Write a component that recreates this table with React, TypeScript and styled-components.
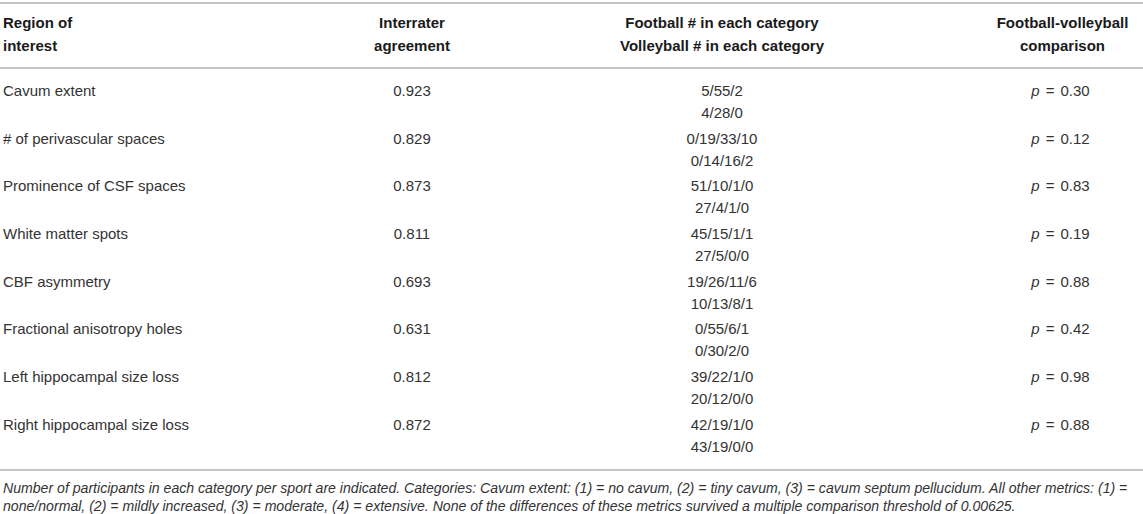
import React from 'react';
import styled, { createGlobalStyle } from 'styled-components';

const GlobalStyle = createGlobalStyle`
  body {
    margin: 0;
    background: #ffffff;
    font-family: "Liberation Sans", Arial, sans-serif;
    color: #333333;
  }
`;

const Wrapper = styled.div`
  width: 1143px;
  padding-top: 2px;
`;

const Table = styled.table`
  width: 100%;
  border-collapse: collapse;
  table-layout: fixed;
  font-size: 15px;
`;

const HeadRow = styled.tr`
  border-top: 2px solid #c4c4c4;
  border-bottom: 2px solid #c4c4c4;
`;

const HeadCell = styled.th<{ align?: string; width: number }>`
  box-sizing: border-box;
  width: ${({ width }) => width}px;
  text-align: ${({ align }) => align || 'center'};
  font-weight: bold;
  color: #1a1a1a;
  line-height: 23px;
  padding: 7px 3px 10px;
  vertical-align: top;
`;

const Row = styled.tr<{ first?: boolean; last?: boolean }>`
  > td {
    padding-top: ${({ first }) => (first ? 11 : 2)}px;
    padding-bottom: ${({ last }) => (last ? 11 : 1.7)}px;
  }
`;

const Cell = styled.td<{ align?: string }>`
  box-sizing: border-box;
  text-align: ${({ align }) => align || 'center'};
  line-height: 22px;
  padding-left: 3px;
  padding-right: 3px;
  vertical-align: top;
`;

const Footer = styled.div`
  border-top: 2px solid #c4c4c4;
  padding: 8px 0 0 3px;
  font-style: italic;
  font-size: 14.1px;
  line-height: 18px;
  color: #333333;
`;

const P = styled.i`
  margin-left: -4px;
`;

const Eq = styled.span`
  margin: 0 6px;
`;

interface Metric {
  name: string;
  agreement: string;
  football: string;
  volleyball: string;
  p: string;
}

const metrics: Metric[] = [
  { name: 'Cavum extent', agreement: '0.923', football: '5/55/2', volleyball: '4/28/0', p: '0.30' },
  { name: '# of perivascular spaces', agreement: '0.829', football: '0/19/33/10', volleyball: '0/14/16/2', p: '0.12' },
  { name: 'Prominence of CSF spaces', agreement: '0.873', football: '51/10/1/0', volleyball: '27/4/1/0', p: '0.83' },
  { name: 'White matter spots', agreement: '0.811', football: '45/15/1/1', volleyball: '27/5/0/0', p: '0.19' },
  { name: 'CBF asymmetry', agreement: '0.693', football: '19/26/11/6', volleyball: '10/13/8/1', p: '0.88' },
  { name: 'Fractional anisotropy holes', agreement: '0.631', football: '0/55/6/1', volleyball: '0/30/2/0', p: '0.42' },
  { name: 'Left hippocampal size loss', agreement: '0.812', football: '39/22/1/0', volleyball: '20/12/0/0', p: '0.98' },
  { name: 'Right hippocampal size loss', agreement: '0.872', football: '42/19/1/0', volleyball: '43/19/0/0', p: '0.88' },
];

const App = () => {
  return (
    <Wrapper>
      <GlobalStyle />
      <Table>
        <thead>
          <HeadRow>
            <HeadCell align="left" width={362}>Region of<br />interest</HeadCell>
            <HeadCell width={100}>Interrater agreement</HeadCell>
            <HeadCell width={520}>Football # in each category<br />Volleyball # in each category</HeadCell>
            <HeadCell width={161}>Football-volleyball comparison</HeadCell>
          </HeadRow>
        </thead>
        <tbody>
          {metrics.map((m, i) => (
            <Row key={m.name} first={i === 0} last={i === metrics.length - 1}>
              <Cell align="left">{m.name}</Cell>
              <Cell>{m.agreement}</Cell>
              <Cell>{m.football}<br />{m.volleyball}</Cell>
              <Cell><P>p</P><Eq>=</Eq>{m.p}</Cell>
            </Row>
          ))}
        </tbody>
      </Table>
      <Footer>
        Number of participants in each category per sport are indicated. Categories: Cavum extent: (1) = no cavum, (2) = tiny cavum, (3) = cavum septum pellucidum. All other metrics: (1) = none/normal, (2) = mildly increased, (3) = moderate, (4) = extensive. None of the differences of these metrics survived a multiple comparison threshold of 0.00625.
      </Footer>
    </Wrapper>
  );
};

export default App;
